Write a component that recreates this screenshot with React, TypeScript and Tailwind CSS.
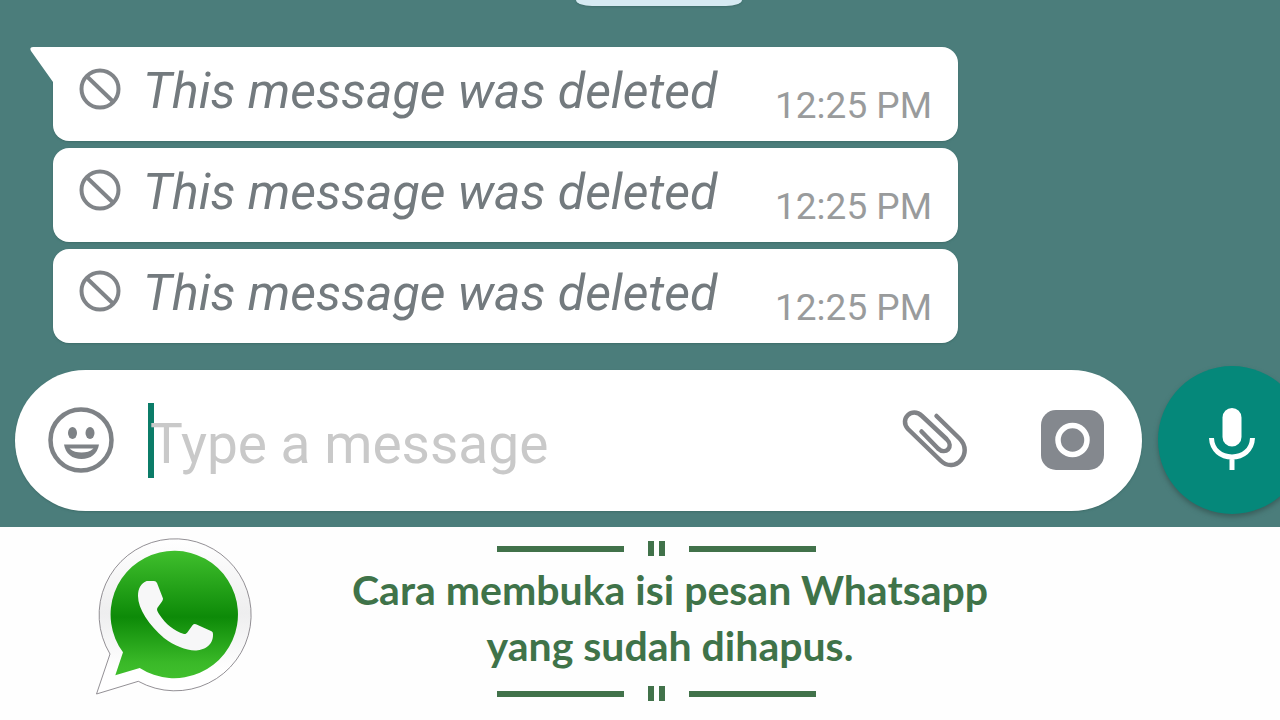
import { useState } from 'react';

const messages = [
  { id: 1, text: 'This message was deleted', time: '12:25 PM' },
  { id: 2, text: 'This message was deleted', time: '12:25 PM' },
  { id: 3, text: 'This message was deleted', time: '12:25 PM' }
];

function DeletedIcon() {
  return (
    <svg viewBox="0 0 42 42" className="h-[42px] w-[42px] shrink-0" fill="none" stroke="#808488" strokeWidth="4" aria-hidden="true">
      <circle cx="21" cy="21" r="18.5" />
      <path d="M8 8.5 34 33.5" />
    </svg>
  );
}

function SmileIcon() {
  return (
    <svg viewBox="0 0 66 66" className="h-[66px] w-[66px]" aria-hidden="true">
      <circle cx="33" cy="33" r="30.5" fill="none" stroke="#7e8286" strokeWidth="4.5" />
      <ellipse cx="24.5" cy="26" rx="4.5" ry="6" fill="#7e8286" />
      <ellipse cx="42" cy="26" rx="4.5" ry="6" fill="#7e8286" />
      <path d="M16 37.5H51C49.5 47 42.5 52 33.5 52S17.5 47 16 37.5Z" fill="#7e8286" />
      <path d="M21.5 41.5H45.5C42 44.5 38 45.5 33.5 45.5S25 44.5 21.5 41.5Z" fill="#fff" />
    </svg>
  );
}

function ClipIcon() {
  return (
    <svg viewBox="0 0 66 60" className="h-[60px] w-[66px]" fill="none" stroke="#808286" strokeWidth="4.5" strokeLinecap="round" strokeLinejoin="round" aria-hidden="true">
      <path d="M34.5 6 57.5 28.5C72 43 53 64.500 38.5 50.500L6 19C-3 9 10 -3.5 20 6L44.5 29C52.5 37 43.500 45.500 36 38.500L19.5 21.500" />
    </svg>
  );
}

function CameraIcon() {
  return (
    <svg viewBox="0 0 63 60" className="h-[60px] w-[63px]" aria-hidden="true">
      <rect width="63" height="60" rx="15" fill="#84888e" />
      <circle cx="31.5" cy="30" r="14.5" fill="none" stroke="#fff" strokeWidth="5.5" />
    </svg>
  );
}

function MicIcon() {
  return (
    <svg viewBox="0 0 46 64" className="h-16 w-[46px]" fill="none" aria-hidden="true">
      <rect x="13.5" y="0" width="19" height="38.5" rx="9.5" fill="#fff" />
      <path d="M2.5 30C3 42 12 49 23 49S43 42 43.5 30M23 49V62" stroke="#fff" strokeWidth="5" />
    </svg>
  );
}

function WhatsappLogo() {
  return (
    <svg viewBox="17 10 156 157" className="h-[157px] w-[156px] shrink-0" role="img" aria-label="Whatsapp">
      <defs>
        <linearGradient id="rim" x1="0" y1="0" x2="0" y2="1">
          <stop offset="0" stopColor="#ffffff" />
          <stop offset="0.48" stopColor="#eeeeef" />
          <stop offset="0.85" stopColor="#ffffff" />
        </linearGradient>
        <linearGradient id="leaf" x1="0" y1="0" x2="0" y2="1">
          <stop offset="0" stopColor="#40bf2d" />
          <stop offset="0.52" stopColor="#0d8a08" />
          <stop offset="0.88" stopColor="#3ab928" />
          <stop offset="1" stopColor="#40bf2d" />
        </linearGradient>
      </defs>
      <path d="M31 126A76 76 0 1 1 59.3 153.3L17.5 166Z" fill="url(#rim)" stroke="#77737a" strokeWidth="0.8" />
      <path d="M44 124.3A63.7 63.7 0 1 1 60.7 140L36.3 147.3Z" fill="url(#leaf)" />
      <path d="M67.7 53H75Q77 53 78 55L84 70.5Q84 72 83 73.5L78.3 80C77.5 82 78.5 83.5 80 86C87 96.5 95 103 105 106C106.5 106.3 107.5 105.5 108.3 104.5L113.5 97.3Q115 95.5 117 96.3L132.5 103.2Q134 104 134 106C134.5 118 124 122.5 116 122.5C107 122 95 118 85 110C70 97 59 81 59 68C59 60 62 55.5 67.7 53Z" fill="#f7f7f8" />
    </svg>
  );
}

function Rule() {
  return (
    <div className="mr-7 flex items-center gap-5" aria-hidden="true">
      <span className="h-[6px] w-[127px] bg-[#41724a]" />
      <span className="flex gap-[5px] px-1">
        <span className="h-[15px] w-[6px] bg-[#41724a]" />
        <span className="h-[15px] w-[6px] bg-[#41724a]" />
      </span>
      <span className="h-[6px] w-[127px] bg-[#41724a]" />
    </div>
  );
}

export default function App() {
  const [draft, setDraft] = useState('');

  return (
    <div className="min-h-screen bg-[#fefefe]">
      <main className="overflow-hidden bg-[#4b7d7b] pb-[13px] font-['Roboto',sans-serif]">
        <div className="ml-[45%] h-[6px] w-[166px] rounded-[0_0_16px_16px/0_0_6px_6px] bg-[#d6eaf2] shadow-[0_1px_2px_#3f6d6a]" />

        <ul className="mt-[41px] mr-6 ml-[53px] flex max-w-[905px] flex-col gap-[7px]">
          {messages.map((message, index) => (
            <li
              key={message.id}
              className={`relative flex h-[94px] items-center rounded-2xl bg-white px-[26px] shadow-[0_1px_2px_#3f6d6a] ${index === 0 ? 'rounded-tl-none' : ''}`}
            >
              {index === 0 ? (
                <svg viewBox="0 0 24 36" className="absolute top-0 -left-[23px] h-9 w-6" aria-hidden="true">
                  <path d="M24 0H3Q-1 0 1 4L23 35V36H24Z" fill="#fff" />
                </svg>
              ) : null}
              <div className="flex items-start gap-[22px] pb-[6px]">
                <DeletedIcon />
                <p className="text-[50px] leading-[46px] whitespace-nowrap text-[#737a7e] italic">{message.text}</p>
              </div>
              <time className="ml-auto pt-6 text-[37px] leading-[46px] whitespace-nowrap text-[#999b9c]">{message.time}</time>
            </li>
          ))}
        </ul>

        <form className="mt-[23px] -mr-[26px] flex items-center gap-4 pl-[15px]" onSubmit={(e) => e.preventDefault()}>
          <div className="flex h-[141px] min-w-0 flex-1 items-center rounded-full bg-white pr-[38px] pl-[33px] shadow-[0_1px_2px_#3f6d6a]">
            <button type="button" aria-label="Emoji">
              <SmileIcon />
            </button>
            <div className="relative ml-9 flex min-w-0 flex-1">
              <span className="absolute top-0 -left-[2px] h-[75px] w-[6px] bg-[#0b7c68]" />
              <input
                type="text"
                aria-label="Message"
                value={draft}
                onChange={(e) => setDraft(e.target.value)}
                placeholder="Type a message"
                className="relative h-[75px] w-full min-w-0 pt-2 text-[55px] text-[#555] outline-none placeholder:text-[#c9c9c9]"
              />
            </div>
            <div className="flex items-center gap-[73px]">
              <button type="button" aria-label="Attach">
                <ClipIcon />
              </button>
              <button type="button" aria-label="Camera">
                <CameraIcon />
              </button>
            </div>
          </div>
          <button
            type="button"
            aria-label="Record voice message"
            className="flex h-[148px] w-[148px] shrink-0 items-center justify-center rounded-full bg-[#05887a] shadow-[0_3px_5px_#3a5f5c]"
          >
            <MicIcon />
          </button>
        </form>
      </main>

      <footer className="flex items-start pt-[11px] pr-48 pl-24">
        <WhatsappLogo />
        <div className="flex flex-1 flex-col items-center pt-[3px]">
          <Rule />
          <h1 className="mt-[6px] mb-3 text-center font-['Lato',sans-serif] text-[41px] leading-[56px] font-bold text-[#3f7349]">
            Cara membuka isi pesan Whatsapp
            <br />
            yang sudah dihapus.
          </h1>
          <Rule />
        </div>
      </footer>
    </div>
  );
}
